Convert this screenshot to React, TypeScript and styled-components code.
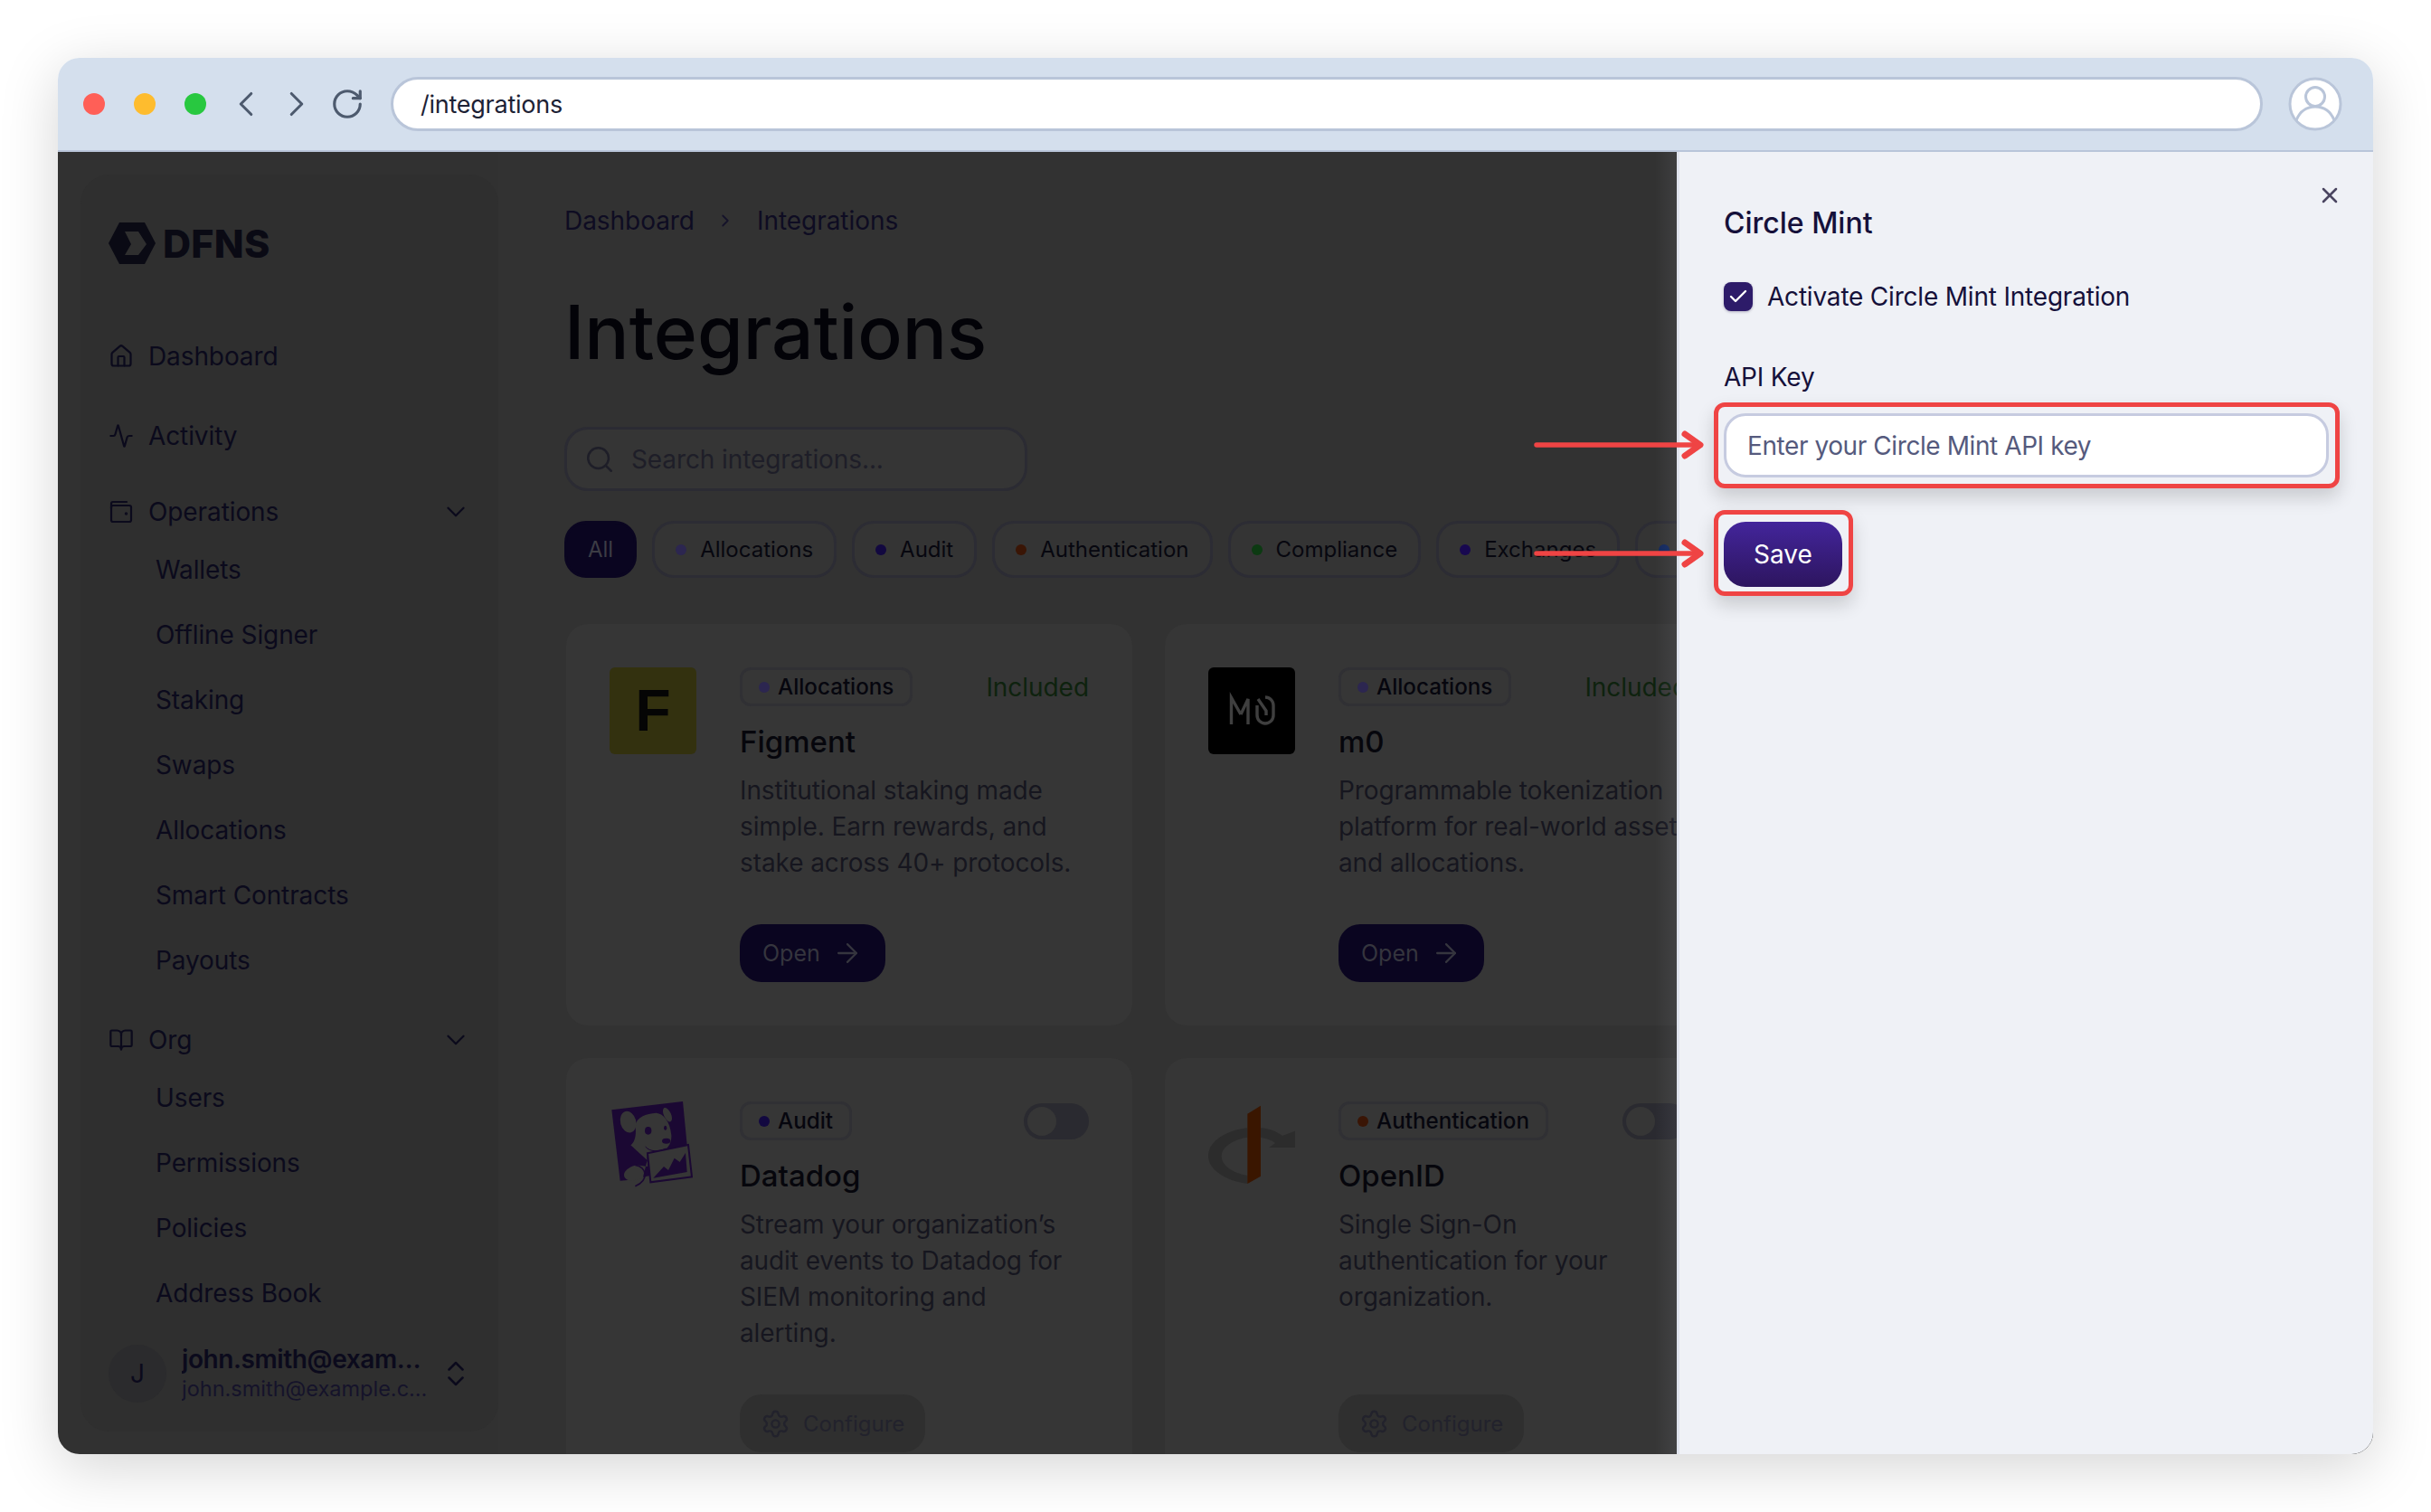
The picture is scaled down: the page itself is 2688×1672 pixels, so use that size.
import React from "react";
import styled, { createGlobalStyle } from "styled-components";
import {
  Activity,
  ArrowRight,
  BookOpen,
  Check,
  ChevronDown,
  ChevronLeft,
  ChevronRight,
  ChevronsUpDown,
  House,
  RotateCw,
  Search,
  Settings,
  X,
} from "lucide-react";

const Global = createGlobalStyle`
  html, body { margin: 0; padding: 0; background: #fff; }
  * { box-sizing: border-box; }
  body { font-family: Inter, "Noto Sans", "Liberation Sans", sans-serif; }
`;

const Page = styled.div`
  width: 2688px;
  height: 1672px;
  padding: 64px;
  background: #fff;
  overflow: hidden;
`;
const BrowserWindow = styled.div`
  width: 2560px;
  height: 1544px;
  border-radius: 24px;
  overflow: hidden;
  display: flex;
  flex-direction: column;
  position: relative;
`;
const WindowShadow = styled.div`
  border-radius: 24px;
  width: 2560px;
  height: 1544px;
  box-shadow: 0 14px 64px rgba(0, 0, 0, 0.17);
`;
const Toolbar = styled.header`
  height: 104px;
  flex: none;
  background: #d4dfed;
  border-bottom: 2px solid #b9c5d9;
  display: flex;
  align-items: center;
  padding: 0 34px 0 28px;
`;
const Light = styled.span<{ $c: string }>`
  width: 24px;
  height: 24px;
  border-radius: 50%;
  background: ${(p) => p.$c};
  margin-right: 32px;
  flex: none;
`;
const ToolIcons = styled.div`
  display: flex;
  align-items: center;
  margin-left: -16px;
  flex: none;
`;
const ToolIcon = styled.span`
  width: 56px;
  display: flex;
  align-items: center;
  justify-content: center;
  color: #4d5a6e;
  flex: none;
`;
const AddressBar = styled.div`
  flex: 1;
  height: 60px;
  margin: 0 28px 0 20px;
  border: 3px solid #b9c5d9;
  border-radius: 30px;
  background: #fff;
  display: flex;
  align-items: center;
  padding: 1px 0 0 30px;
  font-size: 27px;
  letter-spacing: -0.25px;
  color: #1d2235;
`;
const Body = styled.div`
  flex: 1;
  min-height: 0;
  position: relative;
  display: flex;
  overflow: hidden;
  background: #313131;
`;
const Sidebar = styled.aside`
  width: 462px;
  height: 1390px;
  flex: none;
  margin: 25px 0 0 25px;
  padding: 53px 0 0 31px;
  background: #2f2f2f;
  border-radius: 32px;
  color: #0b0a1c;
`;
const LogoRow = styled.div`
  display: flex;
  align-items: center;
  gap: 8px;
  height: 46px;
  margin-bottom: 74px;
`;
const LogoText = styled.span`
  font-size: 43px;
  font-weight: 800;
  letter-spacing: 0.3px;
  color: #0a0a14;
  line-height: 46px;
`;
const NavItem = styled.div`
  height: 56px;
  display: flex;
  align-items: center;
  gap: 16px;
  font-size: 28px;
  letter-spacing: -0.1px;
  padding-right: 30px;
  & + & {
    margin-top: 32px;
  }
  svg {
    flex: none;
  }
`;
const NavLabel = styled.span`
  flex: 1;
`;
const NavGroup = styled.div`
  margin-top: 28px;
  & + & {
    margin-top: 24px;
  }
`;
const SubItem = styled.div`
  height: 72px;
  display: flex;
  align-items: center;
  font-size: 28px;
  letter-spacing: -0.1px;
  padding-left: 52px;
`;
const UserRow = styled.div`
  margin-top: 20px;
  display: flex;
  align-items: center;
`;
const Avatar = styled.div`
  width: 64px;
  height: 64px;
  border-radius: 50%;
  background: #2b2b2d;
  display: flex;
  align-items: center;
  justify-content: center;
  font-size: 28px;
  flex: none;
  margin-right: 17px;
`;
const UserText = styled.div`
  width: 274px;
  flex: none;
  margin-right: 11px;
`;
const UserName = styled.div`
  font-size: 28px;
  line-height: 34px;
  font-weight: 600;
  letter-spacing: -0.4px;
  overflow: hidden;
  white-space: nowrap;
  text-overflow: ellipsis;
  width: 268px;
`;
const UserMail = styled.div`
  font-size: 23.5px;
  line-height: 31px;
  color: #15132a;
  overflow: hidden;
  white-space: nowrap;
  text-overflow: ellipsis;
  width: 274px;
`;
const Main = styled.main`
  flex: 1;
  min-width: 0;
  padding: 56px 0 0 73px;
  background: #323232;
  overflow: hidden;
`;
const Breadcrumb = styled.nav`
  height: 40px;
  display: flex;
  align-items: center;
  font-size: 28px;
  letter-spacing: -0.05px;
  color: #0e0c22;
  gap: 23.5px;
  svg {
    color: #15132a;
  }
`;
const Title = styled.h1`
  margin: 56px 0 0;
  font-size: 82px;
  line-height: 96px;
  font-weight: 500;
  color: #030308;
`;
const SearchBox = styled.div`
  margin-top: 56px;
  width: 512px;
  height: 71px;
  border: 3px solid #2b2b33;
  border-radius: 26px;
  background: #353535;
  display: flex;
  align-items: center;
  gap: 18px;
  padding-left: 19px;
  color: #1e1e28;
  font-size: 28px;
  letter-spacing: -0.1px;
`;
const Chips = styled.div`
  margin-top: 33px;
  display: flex;
  gap: 17px;
  width: 1500px;
`;
const Chip = styled.div<{ $active?: boolean }>`
  height: 63px;
  flex: none;
  display: flex;
  align-items: center;
  gap: 15px;
  padding: 0 23px;
  border-radius: 24px;
  font-size: 24px;
  border: 3px solid ${(p) => (p.$active ? "#0a0520" : "#2c2c34")};
  background: ${(p) => (p.$active ? "#0a0520" : "#343434")};
  color: ${(p) => (p.$active ? "#3c3c44" : "#07070f")};
`;
const Dot = styled.span<{ $c: string }>`
  width: 12px;
  height: 12px;
  border-radius: 50%;
  flex: none;
  background: ${(p) => p.$c};
`;
const Grid = styled.section`
  margin: 51px 0 0 2px;
  display: grid;
  grid-template-columns: 626px 626px;
  grid-auto-rows: 444px 484px;
  gap: 36px;
`;
const Card = styled.article`
  display: flex;
  gap: 48px;
  padding: 48px;
  background: #363636;
  border-radius: 24px;
  min-width: 0;
`;
const CardLogo = styled.div<{ $bg?: string }>`
  width: 96px;
  height: 96px;
  flex: none;
  border-radius: 6px;
  background: ${(p) => p.$bg || "transparent"};
  display: flex;
  align-items: center;
  justify-content: center;
`;
const FigmentF = styled.span`
  font-family: "Liberation Sans", Arial, sans-serif;
  font-size: 64px;
  font-weight: 700;
  color: #050505;
  line-height: 1;
`;
const CardBody = styled.div`
  flex: 1;
  min-width: 0;
  display: flex;
  flex-direction: column;
`;
const CardHead = styled.div`
  height: 43px;
  display: flex;
  justify-content: space-between;
  align-items: center;
`;
const Badge = styled.div`
  height: 43px;
  display: flex;
  align-items: center;
  gap: 9px;
  padding: 0 18px;
  border: 3px solid #303034;
  border-radius: 12px;
  font-size: 24.2px;
  font-weight: 500;
  color: #06060e;
`;
const Included = styled.span`
  font-size: 28px;
  letter-spacing: -0.05px;
  color: #0e220e;
`;
const Toggle = styled.span`
  width: 72px;
  height: 40px;
  border-radius: 20px;
  background: #2a2a30;
  padding: 4px;
  display: block;
`;
const ToggleKnob = styled.span`
  width: 32px;
  height: 32px;
  border-radius: 50%;
  background: #363636;
  display: block;
`;
const CardTitle = styled.h2`
  margin: 19px 0 0;
  font-size: 33px;
  line-height: 40px;
  font-weight: 500;
  color: #06060c;
`;
const CardText = styled.p<{ $wide?: boolean }>`
  margin: 14px ${(p) => (p.$wide ? "-10px" : "6px")} 0 0;
  font-size: 28px;
  line-height: 40px;
  letter-spacing: -0.1px;
  color: #16161f;
`;
const OpenButton = styled.div`
  margin-top: auto;
  width: 161px;
  height: 64px;
  flex: none;
  border-radius: 24px;
  background: #0a0520;
  color: #35353e;
  font-size: 25px;
  display: flex;
  align-items: center;
  gap: 13px;
  padding-left: 25px;
`;
const ConfigureButton = styled.div`
  margin-top: auto;
  width: 205px;
  height: 64px;
  flex: none;
  border-radius: 24px;
  background: #2f2f2f;
  color: #22222c;
  font-size: 24px;
  display: flex;
  align-items: center;
  gap: 14px;
  padding-left: 23px;
`;
const Drawer = styled.aside`
  position: absolute;
  top: 0;
  right: 0;
  bottom: 0;
  width: 770px;
  background: #eff1f6;
  border-left: 3px solid #dfe3ee;
  padding: 59px 49px 0 49px;
  color: #15103a;
  &::before {
    content: "";
    position: absolute;
    top: 0;
    bottom: 0;
    left: -27px;
    width: 24px;
    background: linear-gradient(to right, rgba(255, 255, 255, 0), rgba(220, 225, 245, 0.07));
  }
`;
const CloseButton = styled.span`
  position: absolute;
  top: 34px;
  right: 34px;
  color: #4a4560;
  display: flex;
`;
const DrawerTitle = styled.h2`
  margin: 0;
  font-size: 32px;
  line-height: 40px;
  font-weight: 500;
`;
const CheckRow = styled.label`
  margin-top: 45px;
  display: flex;
  align-items: center;
  gap: 16px;
  font-size: 28px;
  line-height: 32px;
  letter-spacing: -0.2px;
  color: #15103a;
`;
const CheckBox = styled.span`
  width: 32px;
  height: 32px;
  border-radius: 8px;
  background: #2d1b69;
  color: #fff;
  display: flex;
  align-items: center;
  justify-content: center;
  box-shadow: 0 1px 3px rgba(20, 10, 60, 0.3);
  flex: none;
`;
const FieldLabel = styled.div`
  margin-top: 56px;
  font-size: 28px;
  line-height: 34px;
  letter-spacing: -0.2px;
`;
const KeyInput = styled.div`
  margin-top: 23px;
  width: 669px;
  height: 71px;
  border: 3px solid #c6cbe0;
  border-radius: 24px;
  background: #fff;
  color: #555a7d;
  font-size: 28px;
  letter-spacing: -0.42px;
  display: flex;
  align-items: center;
  padding-left: 23px;
`;
const SaveButton = styled.div`
  margin-top: 49px;
  width: 131px;
  height: 72px;
  border-radius: 24px;
  background: linear-gradient(180deg, #43259b, #2d155f);
  color: #fff;
  font-size: 28px;
  font-weight: 400;
  display: flex;
  align-items: center;
  justify-content: center;
`;
const Highlight = styled.div<{ $x: number; $y: number; $w: number; $h: number }>`
  position: absolute;
  left: ${(p) => p.$x}px;
  top: ${(p) => p.$y}px;
  width: ${(p) => p.$w}px;
  height: ${(p) => p.$h}px;
  border: 5px solid #ef4444;
  border-radius: 12px;
  box-shadow: 0 10px 20px rgba(0, 0, 0, 0.16);
`;
const Pointer = styled.svg<{ $y: number }>`
  position: absolute;
  left: 1632px;
  top: ${(p) => p.$y}px;
`;

const DfnsMark = () => (
  <svg width="52" height="46" viewBox="0 0 52 46">
    <path d="M0 23 12 0h28l12 23-12 23H12z" fill="#0a0a14" />
    <path d="M18 10h15l9 14-9 12H18l7-12z" fill="#2f2f2f" />
  </svg>
);
const WalletIcon = () => (
  <svg width="28" height="28" viewBox="0 0 28 28" fill="none" stroke="currentColor" strokeWidth="2.2" strokeLinecap="round" strokeLinejoin="round">
    <rect x="3" y="7" width="22" height="18" rx="2" />
    <path d="M3 10V5a2 2 0 0 1 2-2h15" />
    <circle cx="19.5" cy="16" r=".6" fill="currentColor" />
  </svg>
);
const M0Logo = () => (
  <svg width="96" height="96" viewBox="0 0 96 96" fill="none" stroke="#3f3f3f" strokeWidth="3.4">
    <path d="M25.5 63V33.5L36 52" />
    <path d="M36 52 44 35V63" />
    <path d="M55 35 64 48V53" />
    <path d="M54 42V53a9 9 0 0 0 18 0V42a9 9 0 0 0-9-9" />
  </svg>
);
const DatadogLogo = () => (
  <svg width="96" height="96" viewBox="105 84 288 288">
    <path d="M112 112 348 84l14 144-134 30 12 72-75 15-25 2z" fill="#1b0833" />
    <path d="M190 165c5-30 35-40 70-43 25 3 45 28 50 73 2 30-15 55-48 63l-34 4 4 38-38-5c-20 5-35 15-40 27-5 15 10 25 25 25l36-8 15-60-55-50c15-10 20-40 15-64z" fill="#363636" />
    <ellipse cx="167" cy="152" rx="26" ry="36" transform="rotate(-15 167 152)" fill="#363636" />
    <ellipse cx="297" cy="128" rx="12" ry="25" transform="rotate(-25 297 128)" fill="#363636" />
    <ellipse cx="233" cy="181" rx="11" ry="13" fill="#1b0833" />
    <ellipse cx="290" cy="172" rx="5" ry="8" fill="#1b0833" />
    <ellipse cx="293" cy="215" rx="14" ry="9" fill="#1b0833" />
    <path d="M224 234c15 18 45 18 68 6" stroke="#1b0833" strokeWidth="3" fill="none" />
    <path d="M231 256 366 228l12 106-137 18z" fill="#363636" stroke="#1b0833" strokeWidth="6" />
    <path d="M250 338 285 300l15 12 20-40 18 13 19-30 5 63z" fill="#1b0833" />
    <path d="M190 295c38 5 48 50 0 70" stroke="#1b0833" strokeWidth="5" fill="none" />
  </svg>
);
const OpenIdLogo = () => (
  <svg width="96" height="96" viewBox="108 84 288 288">
    <path d="M238 172C165 180 108 218 108 265c0 45 57 83 130 92v-27c-48-8-86-32-86-65 0-30 38-55 86-62z" fill="#2c2c2c" />
    <path d="M282 172c28 2 53 12 72 26l43-16v55h-87l20-15c-12-10-30-16-48-19z" fill="#2c2c2c" />
    <path d="M238 125l44-27v234l-44 25z" fill="#3a1600" />
  </svg>
);

const Arrow = ({ y }: { y: number }) => (
  <Pointer $y={y} width="190" height="32" viewBox="0 0 190 32" fill="none" stroke="#ef4444" strokeWidth="5.5" strokeLinecap="round" strokeLinejoin="round">
    <path d="M3 16h180" />
    <path d="M167 4 184 16 167 28" strokeWidth="7" />
  </Pointer>
);

const cats: [string, string][] = [
  ["Allocations", "#2c2650"],
  ["Audit", "#120840"],
  ["Authentication", "#3a1505"],
  ["Compliance", "#0c3a12"],
  ["Exchanges", "#180850"],
  ["Explorers", "#12285e"],
];

const opsItems = ["Wallets", "Offline Signer", "Staking", "Swaps", "Allocations", "Smart Contracts", "Payouts"];
const orgItems = ["Users", "Permissions", "Policies", "Address Book"];

export default function App() {
  return (
    <Page>
      <Global />
      <WindowShadow>
        <BrowserWindow>
          <Toolbar>
            <Light $c="#ff5f57" />
            <Light $c="#febc2e" />
            <Light $c="#28c840" />
            <ToolIcons>
              <ToolIcon>
                <ChevronLeft size={46} strokeWidth={1.6} />
              </ToolIcon>
              <ToolIcon>
                <ChevronRight size={46} strokeWidth={1.6} />
              </ToolIcon>
              <ToolIcon>
                <RotateCw size={38} strokeWidth={2} />
              </ToolIcon>
            </ToolIcons>
            <AddressBar>/integrations</AddressBar>
            <svg width="60" height="60" viewBox="0 0 60 60" fill="#fff" stroke="#b9c5d9" strokeWidth="3">
              <circle cx="30" cy="30" r="28" />
              <circle cx="30" cy="22" r="10.5" />
              <path d="M9 48c4-10 12-15 21-15s17 5 21 15" fill="none" />
            </svg>
          </Toolbar>
          <Body>
            <Sidebar>
              <LogoRow>
                <DfnsMark />
                <LogoText>DFNS</LogoText>
              </LogoRow>
              <NavItem>
                <House size={28} strokeWidth={1.9} />
                <NavLabel>Dashboard</NavLabel>
              </NavItem>
              <NavItem>
                <Activity size={28} strokeWidth={1.9} />
                <NavLabel>Activity</NavLabel>
              </NavItem>
              <NavGroup>
                <NavItem>
                  <WalletIcon />
                  <NavLabel>Operations</NavLabel>
                  <ChevronDown size={34} strokeWidth={1.6} />
                </NavItem>
                {opsItems.map((t) => (
                  <SubItem key={t}>{t}</SubItem>
                ))}
              </NavGroup>
              <NavGroup>
                <NavItem>
                  <BookOpen size={28} strokeWidth={1.9} />
                  <NavLabel>Org</NavLabel>
                  <ChevronDown size={34} strokeWidth={1.6} />
                </NavItem>
                {orgItems.map((t) => (
                  <SubItem key={t}>{t}</SubItem>
                ))}
              </NavGroup>
              <UserRow>
                <Avatar>J</Avatar>
                <UserText>
                  <UserName>john.smith@example.com</UserName>
                  <UserMail>john.smith@example.com</UserMail>
                </UserText>
                <ChevronsUpDown size={36} strokeWidth={1.7} />
              </UserRow>
            </Sidebar>
            <Main>
              <Breadcrumb>
                <span>Dashboard</span>
                <ChevronRight size={22} strokeWidth={2} />
                <span>Integrations</span>
              </Breadcrumb>
              <Title>Integrations</Title>
              <SearchBox>
                <Search size={34} strokeWidth={1.8} />
                <span>Search integrations...</span>
              </SearchBox>
              <Chips>
                <Chip $active>All</Chip>
                {cats.map(([t, c]) => (
                  <Chip key={t}>
                    <Dot $c={c} />
                    {t}
                  </Chip>
                ))}
              </Chips>
              <Grid>
                <Card>
                  <CardLogo $bg="#33310f">
                    <FigmentF>F</FigmentF>
                  </CardLogo>
                  <CardBody>
                    <CardHead>
                      <Badge>
                        <Dot $c="#2c2650" />
                        Allocations
                      </Badge>
                      <Included>Included</Included>
                    </CardHead>
                    <CardTitle>Figment</CardTitle>
                    <CardText>Institutional staking made simple. Earn rewards, and stake across 40+ protocols.</CardText>
                    <OpenButton>
                      Open
                      <ArrowRight size={34} strokeWidth={1.6} />
                    </OpenButton>
                  </CardBody>
                </Card>
                <Card>
                  <CardLogo $bg="#000">
                    <M0Logo />
                  </CardLogo>
                  <CardBody>
                    <CardHead>
                      <Badge>
                        <Dot $c="#2c2650" />
                        Allocations
                      </Badge>
                      <Included>Included</Included>
                    </CardHead>
                    <CardTitle>m0</CardTitle>
                    <CardText $wide>Programmable tokenization platform for real-world assets and allocations.</CardText>
                    <OpenButton>
                      Open
                      <ArrowRight size={34} strokeWidth={1.6} />
                    </OpenButton>
                  </CardBody>
                </Card>
                <Card>
                  <CardLogo>
                    <DatadogLogo />
                  </CardLogo>
                  <CardBody>
                    <CardHead>
                      <Badge>
                        <Dot $c="#120840" />
                        Audit
                      </Badge>
                      <Toggle>
                        <ToggleKnob />
                      </Toggle>
                    </CardHead>
                    <CardTitle>Datadog</CardTitle>
                    <CardText>Stream your organization’s audit events to Datadog for SIEM monitoring and alerting.</CardText>
                    <ConfigureButton>
                      <Settings size={33} strokeWidth={1.7} />
                      Configure
                    </ConfigureButton>
                  </CardBody>
                </Card>
                <Card>
                  <CardLogo>
                    <OpenIdLogo />
                  </CardLogo>
                  <CardBody>
                    <CardHead>
                      <Badge>
                        <Dot $c="#3a1505" />
                        Authentication
                      </Badge>
                      <Toggle>
                        <ToggleKnob />
                      </Toggle>
                    </CardHead>
                    <CardTitle>OpenID</CardTitle>
                    <CardText>Single Sign-On authentication for your organization.</CardText>
                    <ConfigureButton>
                      <Settings size={33} strokeWidth={1.7} />
                      Configure
                    </ConfigureButton>
                  </CardBody>
                </Card>
              </Grid>
            </Main>
            <Drawer>
              <CloseButton>
                <X size={28} strokeWidth={2.2} />
              </CloseButton>
              <DrawerTitle>Circle Mint</DrawerTitle>
              <CheckRow>
                <CheckBox>
                  <Check size={24} strokeWidth={2.4} />
                </CheckBox>
                Activate Circle Mint Integration
              </CheckRow>
              <FieldLabel>API Key</FieldLabel>
              <KeyInput>Enter your Circle Mint API key</KeyInput>
              <SaveButton>Save</SaveButton>
            </Drawer>
            <Highlight $x={1831} $y={277} $w={692} $h={95} />
            <Highlight $x={1831} $y={396} $w={154} $h={95} />
            <Arrow y={308} />
            <Arrow y={428} />
          </Body>
        </BrowserWindow>
      </WindowShadow>
    </Page>
  );
}
